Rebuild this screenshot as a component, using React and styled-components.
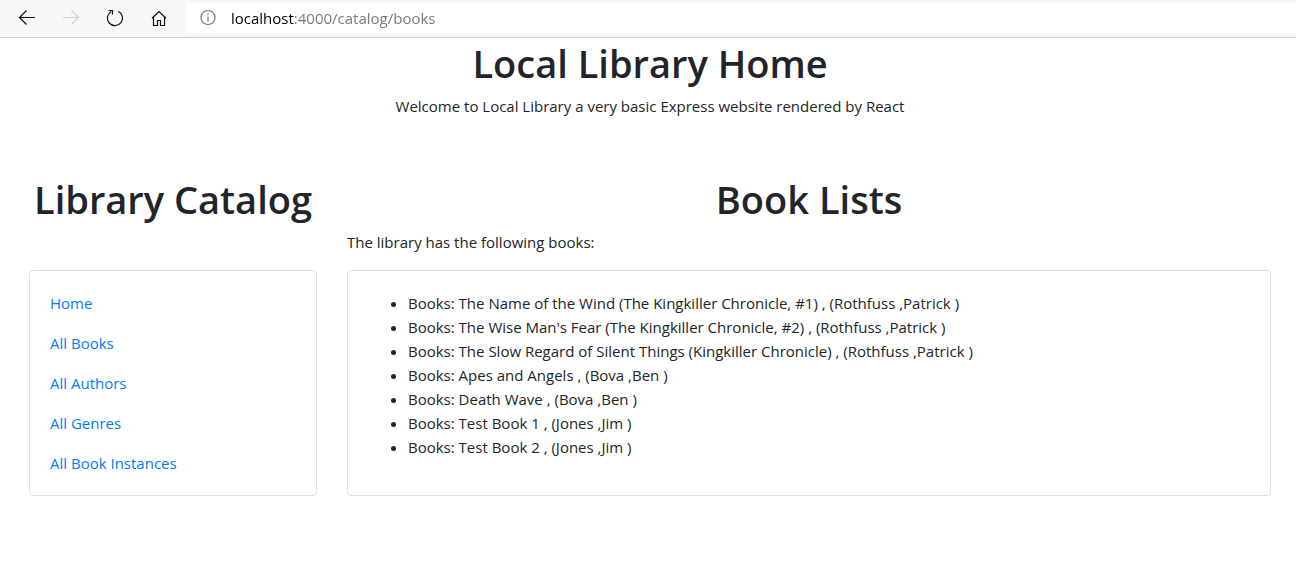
import React from "react";
import styled, { createGlobalStyle } from "styled-components";

const GlobalStyle = createGlobalStyle`
  *, *::before, *::after { box-sizing: border-box; }
  body {
    margin: 0;
    background: #fff;
    color: #212529;
    font-family: "Segoe UI", "Open Sans", "Noto Sans", sans-serif;
    font-size: 15px;
    line-height: 24px;
  }
`;

const Toolbar = styled.header`
  display: flex;
  align-items: center;
  height: 38px;
  padding: 0 0 2px 15px;
  background: #f7f7f7;
  border-bottom: 1px solid #d0d0d0;
`;

const NavButtons = styled.nav`
  display: flex;
  gap: 20px;
  margin-right: 15px;
`;

const IconButton = styled.button`
  display: flex;
  width: 24px;
  height: 24px;
  align-items: center;
  justify-content: center;
  padding: 0;
  border: 0;
  background: none;
  color: #111;

  &:disabled { color: #d0d0d0; }
`;

const Icon = styled.svg`
  display: block;
  flex: none;
  width: 18px;
  height: 18px;
  fill: none;
  stroke: currentColor;
  stroke-width: ${(p) => p.$weight || 1.2};
`;

const AddressBar = styled.label`
  display: flex;
  flex: 1;
  align-items: center;
  gap: 14px;
  height: 30px;
  padding-left: 13px;
  border-radius: 4px 0 0 4px;
  background: #fff;
  color: #707070;
`;

const AddressInput = styled.input`
  flex: 1;
  min-width: 0;
  height: 24px;
  padding: 0;
  border: 0;
  outline: 0;
  font: inherit;
  color: transparent;
  background: linear-gradient(to right, #000 63px, #767676 63px);
  background-clip: text;
`;

const Page = styled.main`
  padding: 0 10px 40px 14px;
`;

const Heading = styled.h1`
  margin: 0 0 6px;
  font-size: 38px;
  font-weight: 600;
  line-height: 50px;
  text-align: center;
  white-space: nowrap;
`;

const Text = styled.p`
  margin: 0 0 16px;
  text-align: ${(p) => (p.$centered ? "center" : "left")};
`;

const Columns = styled.div`
  display: grid;
  grid-template-columns: minmax(0, 1fr) minmax(0, 3fr);
  margin-top: 56px;
`;

const Column = styled.section`
  display: flex;
  flex-direction: column;
  padding: 0 15px;
`;

const Card = styled.div`
  margin-top: auto;
  padding: 20px;
  border: 1px solid #dfdfdf;
  border-radius: 4px;
`;

const LinkList = styled.nav`
  display: flex;
  flex-direction: column;
  align-items: flex-start;
  gap: 16px;
`;

const CatalogLink = styled.a`
  color: #007bff;
  text-decoration: none;

  &:hover { text-decoration: underline; }
`;

const BookList = styled.ul`
  margin: 0 0 16px;
  padding-left: 40px;
`;

const links = [
  ["Home", "/catalog"],
  ["All Books", "/catalog/books"],
  ["All Authors", "/catalog/authors"],
  ["All Genres", "/catalog/genres"],
  ["All Book Instances", "/catalog/bookinstances"],
];

const books = [
  ["The Name of the Wind (The Kingkiller Chronicle, #1)", "Rothfuss", "Patrick"],
  ["The Wise Man's Fear (The Kingkiller Chronicle, #2)", "Rothfuss", "Patrick"],
  ["The Slow Regard of Silent Things (Kingkiller Chronicle)", "Rothfuss", "Patrick"],
  ["Apes and Angels", "Bova", "Ben"],
  ["Death Wave", "Bova", "Ben"],
  ["Test Book 1", "Jones", "Jim"],
  ["Test Book 2", "Jones", "Jim"],
];

function BrowserBar() {
  return (
    <Toolbar>
      <NavButtons aria-label="Browser">
        <IconButton aria-label="Back">
          <Icon viewBox="0 0 18 18"><path d="M17 8.5H1.5M8.5 1.5l-7 7 7 7" /></Icon>
        </IconButton>
        <IconButton aria-label="Forward" disabled>
          <Icon viewBox="0 0 18 18"><path d="M1 8.5h15.5M9.5 1.5l7 7-7 7" /></Icon>
        </IconButton>
        <IconButton aria-label="Refresh">
          <Icon viewBox="0 0 18 18">
            <path d="M12.3 2.2A7.6 7.6 0 1 1 5.2 2.4M2.5 1.5h4v4" />
          </Icon>
        </IconButton>
        <IconButton aria-label="Home page">
          <Icon viewBox="0 0 18 18">
            <path d="M2 9.3L9 2.5l7 6.8M3.5 8.1v8.4H7.5v-5h3v5h4V8.1" />
          </Icon>
        </IconButton>
      </NavButtons>
      <AddressBar>
        <Icon viewBox="0 0 18 18">
          <circle cx="9" cy="8.5" r="7" />
          <path d="M9 7.5v5M9 4.8v1.4" />
        </Icon>
        <AddressInput aria-label="Address" defaultValue="localhost:4000/catalog/books" spellCheck={false} />
      </AddressBar>
    </Toolbar>
  );
}

export default function App() {
  return (
    <>
      <GlobalStyle />
      <BrowserBar />
      <Page>
        <Heading>Local Library Home</Heading>
        <Text $centered>Welcome to Local Library a very basic Express website rendered by React</Text>
        <Columns>
          <Column>
            <Heading as="h2">Library Catalog</Heading>
            <Card>
              <LinkList aria-label="Catalog">
                {links.map(([label, href]) => (
                  <CatalogLink key={href} href={href}>{label}</CatalogLink>
                ))}
              </LinkList>
            </Card>
          </Column>
          <Column>
            <Heading as="h2">Book Lists</Heading>
            <Text>The library has the following books:</Text>
            <Card>
              <BookList>
                {books.map(([title, last, first]) => (
                  <li key={title}>{`Books: ${title} , (${last} ,${first} )`}</li>
                ))}
              </BookList>
            </Card>
          </Column>
        </Columns>
      </Page>
    </>
  );
}
